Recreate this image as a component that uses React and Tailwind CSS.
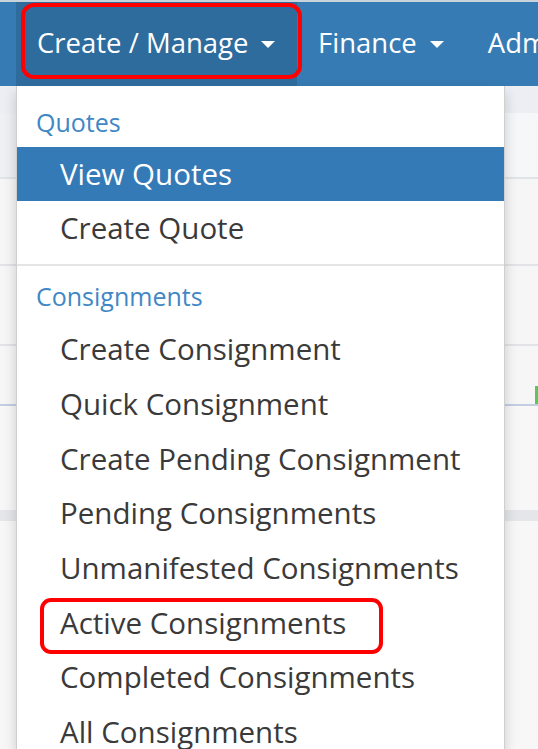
import React from "react";

const Caret = () => (
  <span className="inline-block ml-[13px] w-0 h-0 border-t-[7px] border-t-white border-x-[7px] border-x-transparent translate-y-[1px]" />
);

const groups = [
  {
    title: "Quotes",
    items: ["View Quotes", "Create Quote"],
  },
  {
    title: "Consignments",
    items: [
      "Create Consignment",
      "Quick Consignment",
      "Create Pending Consignment",
      "Pending Consignments",
      "Unmanifested Consignments",
      "Active Consignments",
      "Completed Consignments",
      "All Consignments",
    ],
  },
];

export default function App() {
  return (
    <div className="relative w-[538px] h-[749px] overflow-hidden bg-[#f3f4f7] font-['Open_Sans',sans-serif]">
      {/* top nav */}
      <nav className="h-[86px] bg-[#367bb3] border-t-2 border-[#c9d3dc] flex items-stretch pl-4 text-white text-[27.5px] whitespace-nowrap overflow-hidden">
        <a className="shrink-0 bg-[#2f6c9e] w-[281px] flex items-center pl-[21px] pb-[2px]">
          Create / Manage
          <Caret />
        </a>
        <a className="shrink-0 flex items-center pl-[21px] pr-[44px] pb-[2px]">
          Finance
          <Caret />
        </a>
        <a className="shrink-0 flex items-center pb-[2px]">Administration</a>
      </nav>

      {/* page behind the menu */}
      <div className="flex flex-col">
        <div className="h-[27px] bg-[#eceef3]" />
        <div className="h-[66px] bg-gradient-to-r from-[#eef0f3] to-[#f6f7f8] border-b-2 border-[#e1e3e6]" />
        <div className="h-[87px] bg-[#f6f6f7] border-b-2 border-[#e1e3e6]" />
        <div className="h-[80px] bg-[#f6f6f7] border-b-2 border-[#e1e3e6]" />
        <div className="h-[60px] bg-[#f6f6f7] border-b-2 border-[#c3cde3] flex justify-end items-end">
          <div className="w-[3px] h-[18px] bg-[#5cc65c]" />
        </div>
        <div className="h-[104px] bg-[#f7f7f8]" />
        <div className="h-[11px] bg-[#e4e6ea]" />
        <div className="h-[240px] bg-[#f7f7f8]" />
      </div>

      {/* dropdown menu */}
      <div className="absolute left-4 top-[86px] bottom-0 w-[489px] bg-white border-x border-[#cfcfcf] shadow-[0_6px_12px_rgba(0,0,0,0.18)] pt-[12px] whitespace-nowrap">
        {groups.map((g, gi) => (
          <div key={g.title}>
            {gi > 0 && <div className="h-[2px] bg-[#e5e5e5] mt-[8px] mb-[9px]" />}
            <div
              className={
                "flex items-center pl-[19px] text-[25px] text-[#3f88c5] " +
                (gi === 0 ? "h-[49px]" : "h-[47px] pb-[4px]")
              }
            >
              {g.title}
            </div>
            {g.items.map((item, i) => (
              <div
                key={item}
                className={
                  "flex items-center pl-[43px] text-[29.5px] " +
                  (gi === 0 && i === 0
                    ? "h-[54px] bg-[#337ab7] text-white"
                    : gi === 0
                    ? "h-[55px] text-[#3a3a3a]"
                    : "h-[54.7px] text-[#3a3a3a]")
                }
              >
                {item}
              </div>
            ))}
          </div>
        ))}
      </div>

      {/* annotation boxes */}
      <div className="absolute left-[21px] top-[3px] w-[281px] h-[76px] border-4 border-[#f00] rounded-[13px]" />
      <div className="absolute left-[40px] top-[598px] w-[343px] h-[56px] border-4 border-[#f00] rounded-[11px]" />
    </div>
  );
}
